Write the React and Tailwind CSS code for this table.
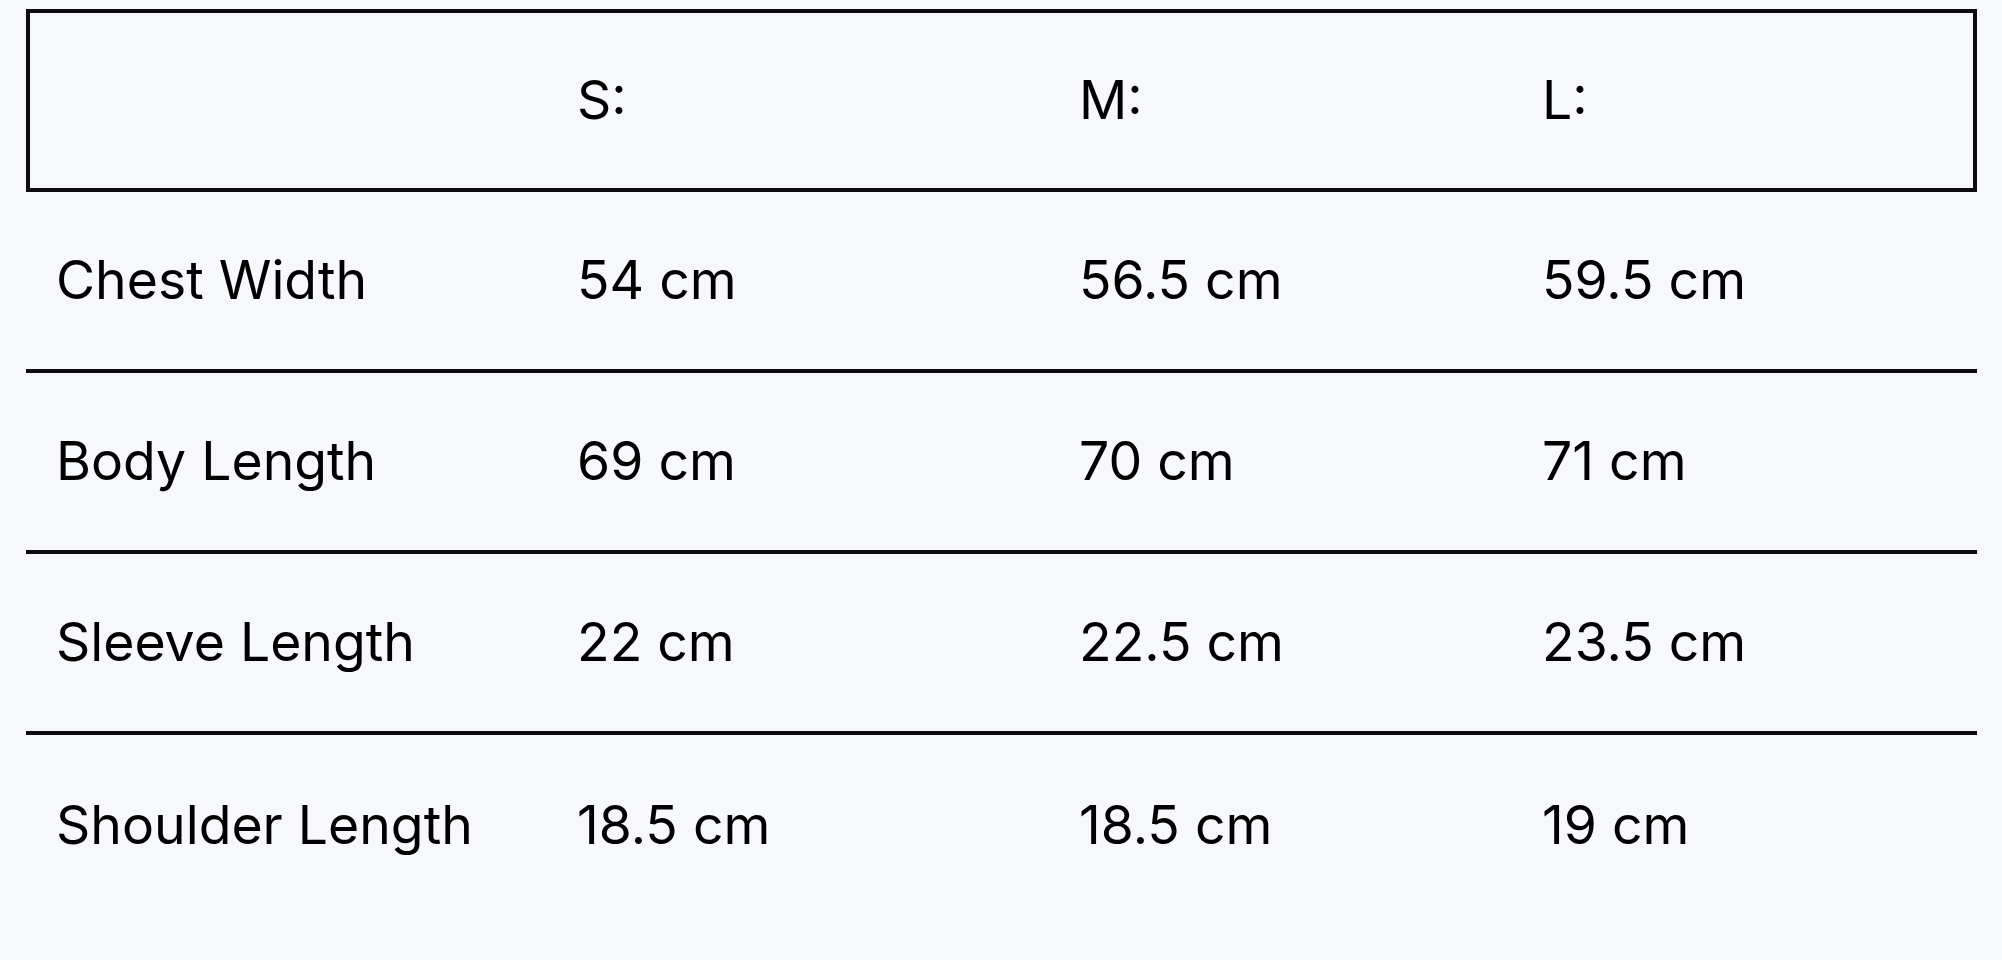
const SIZES = ['S:', 'M:', 'L:'];

const ROWS = [
  { label: 'Chest Width', values: ['54 cm', '56.5 cm', '59.5 cm'] },
  { label: 'Body Length', values: ['69 cm', '70 cm', '71 cm'] },
  { label: 'Sleeve Length', values: ['22 cm', '22.5 cm', '23.5 cm'] },
  { label: 'Shoulder Length', values: ['18.5 cm', '18.5 cm', '19 cm'] },
];

export default function App() {
  return (
    <div className="min-h-screen w-full bg-[#f7f8fc] text-black font-['Inter','Noto_Sans',sans-serif]">
      <div className="pt-[9px] pl-[26px] w-[1977px]">
        {/* header row with full box border */}
        <div className="h-[183px] border-4 border-[#0d0d0f] grid grid-cols-[520px_502px_463px_1fr] items-center text-[53.5px] leading-none pb-[2px]">
          <div />
          {SIZES.map((s) => (
            <div key={s} className="pl-[27px]">{s}</div>
          ))}
        </div>

        {ROWS.map((r, i) => (
          <div
            key={r.label}
            className={`h-[181px] grid grid-cols-[524px_502px_463px_1fr] items-center text-[53.5px] leading-none pb-[2px] ${
              i < ROWS.length - 1 ? 'border-b-4 border-[#0d0d0f]' : ''
            }`}
          >
            <div className="pl-[30px]">{r.label}</div>
            {r.values.map((v, j) => (
              <div key={j} className="pl-[27px]">{v}</div>
            ))}
          </div>
        ))}
      </div>
    </div>
  );
}
